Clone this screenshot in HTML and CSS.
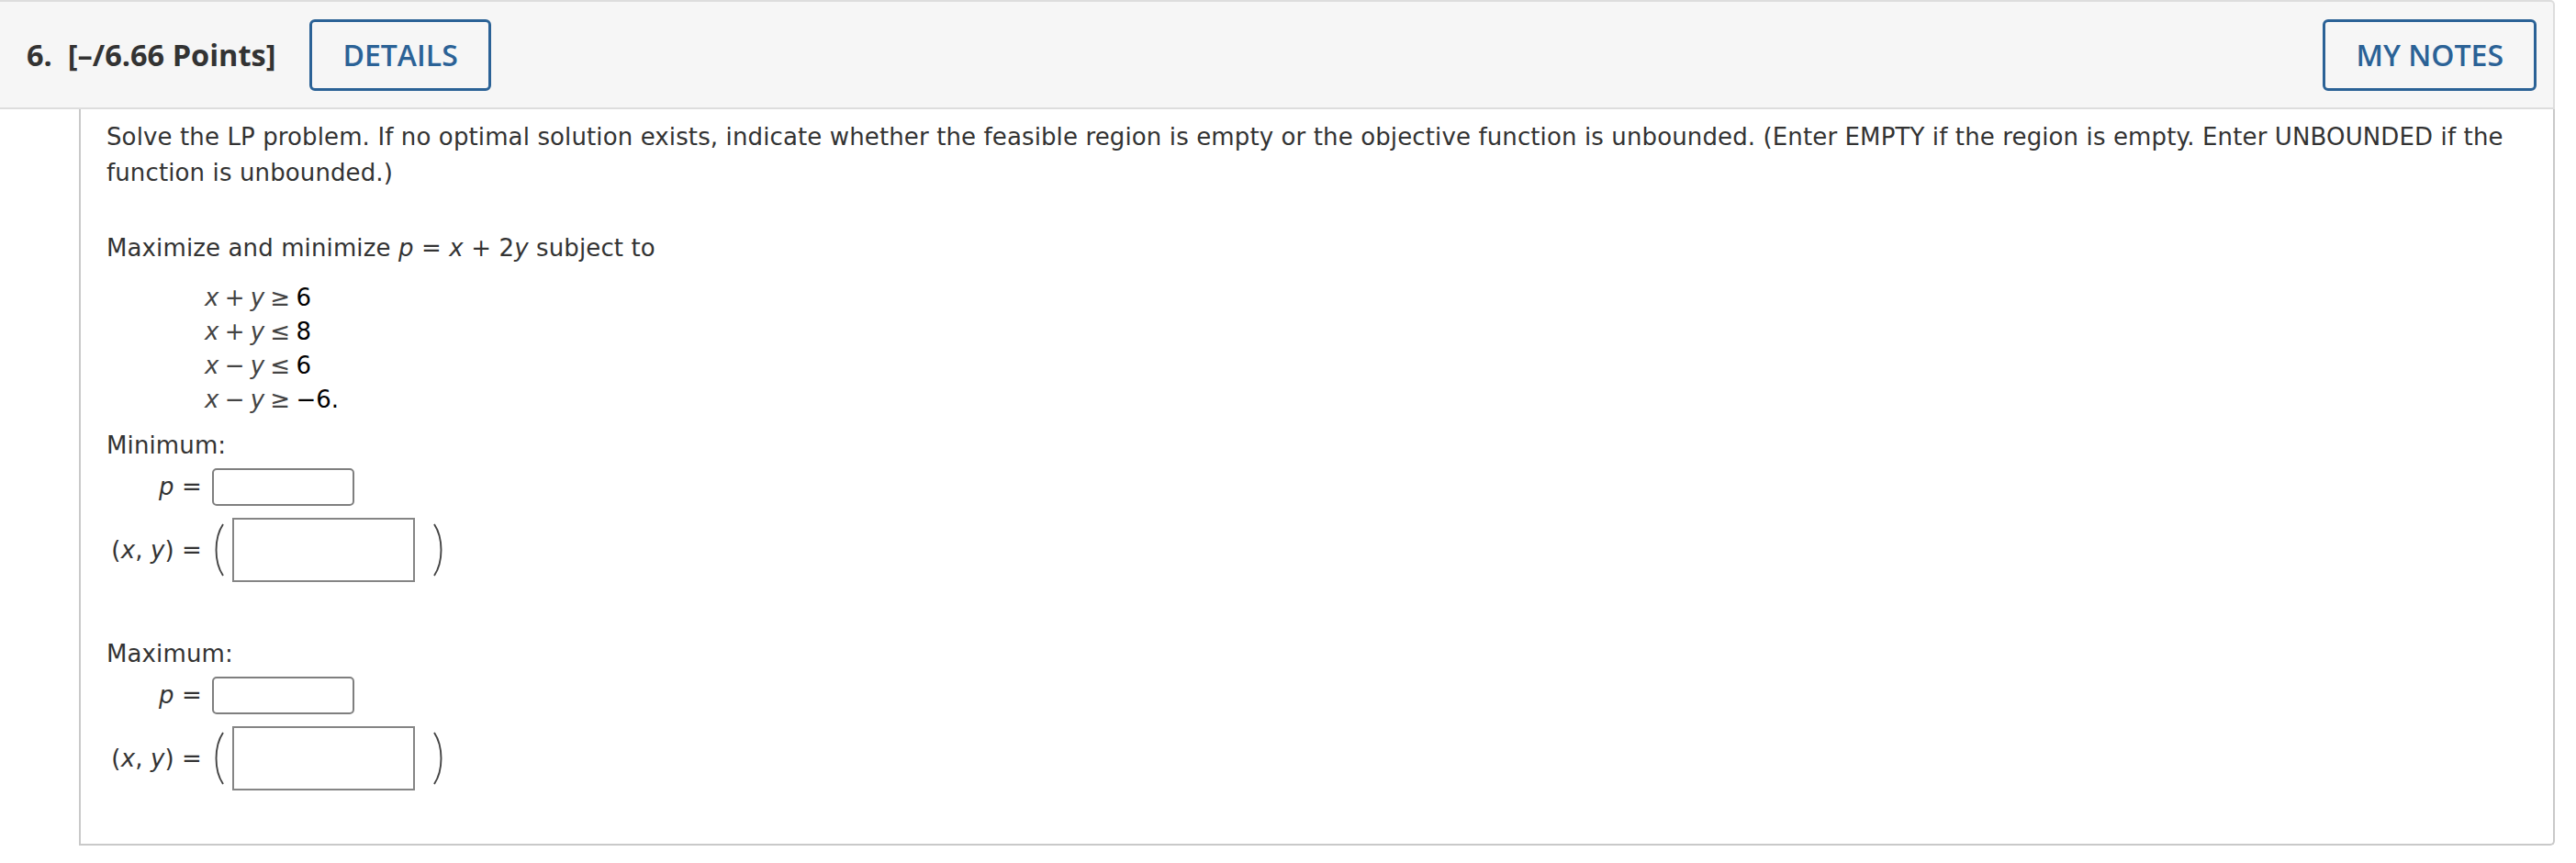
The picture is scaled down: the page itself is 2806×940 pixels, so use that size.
FILE: index.html
```html
<!DOCTYPE html>
<html lang="en">
<head>
<meta charset="utf-8">
<title>Question 6</title>
<link rel="stylesheet" href="styles.css">
</head>
<body>
<div class="question">
  <div class="q-header">
    <span class="q-title">6.&nbsp; [–/6.66 Points]</span>
    <button class="btn">DETAILS</button>
    <span class="spacer"></span>
    <button class="btn">MY NOTES</button>
  </div>
  <div class="q-body">
    <p class="intro">Solve the LP problem. If no optimal solution exists, indicate whether the feasible region is empty or the objective function is unbounded. (Enter EMPTY if the region is empty. Enter UNBOUNDED if the function is unbounded.)</p>
    <p class="objective">Maximize and minimize <i>p</i> = <i>x</i> + 2<i>y</i> subject to</p>
    <div class="constraints">
      <div><i>x</i> + <i>y</i> ≥ <span class="num">6</span></div>
      <div><i>x</i> + <i>y</i> ≤ <span class="num">8</span></div>
      <div><i>x</i> − <i>y</i> ≤ <span class="num">6</span></div>
      <div><i>x</i> − <i>y</i> ≥ <span class="num">−6.</span></div>
    </div>

    <div class="section-label first">Minimum:</div>
    <div class="answers">
      <div class="a-label"><i>p</i> =</div>
      <div class="a-field"><span class="p-input"></span></div>
      <div class="a-label xy-label">(<i>x</i>, <i>y</i>) =</div>
      <div class="a-field xy-field">
        <svg class="paren" width="14" height="58" viewBox="0 0 14 58"><path d="M12 1 C2 16 2 42 12 57" fill="none" stroke="#444" stroke-width="1.9"/></svg>
        <span class="xy-input"></span>
        <svg class="paren" width="14" height="58" viewBox="0 0 14 58"><path d="M2 1 C12 16 12 42 2 57" fill="none" stroke="#444" stroke-width="1.9"/></svg>
      </div>
    </div>

    <div class="section-label second">Maximum:</div>
    <div class="answers">
      <div class="a-label"><i>p</i> =</div>
      <div class="a-field"><span class="p-input"></span></div>
      <div class="a-label xy-label">(<i>x</i>, <i>y</i>) =</div>
      <div class="a-field xy-field">
        <svg class="paren" width="14" height="58" viewBox="0 0 14 58"><path d="M12 1 C2 16 2 42 12 57" fill="none" stroke="#444" stroke-width="1.9"/></svg>
        <span class="xy-input"></span>
        <svg class="paren" width="14" height="58" viewBox="0 0 14 58"><path d="M2 1 C12 16 12 42 2 57" fill="none" stroke="#444" stroke-width="1.9"/></svg>
      </div>
    </div>
  </div>
</div>
</body>
</html>
```
FILE: styles.css
```css
body {
  margin: 0;
  background: #ffffff;
}

.question {
  width: 2783px;
}

.q-header {
  display: flex;
  align-items: center;
  height: 119px;
  box-sizing: border-box;
  background: #f6f6f6;
  border: 2px solid #dddddd;
  border-left: none;
  border-top-right-radius: 5px;
  padding: 0 18px 0 29px;
}

.q-title {
  font-family: "Open Sans", "Liberation Sans", sans-serif;
  font-weight: 700;
  font-size: 32.5px;
  color: #333333;
  margin-right: 37px;
}

.spacer {
  flex: 1;
}

.btn {
  font-family: "Open Sans", "Liberation Sans", sans-serif;
  font-weight: 600;
  font-size: 32px;
  color: #2b6296;
  background: transparent;
  border: 3px solid #2b6296;
  border-radius: 6px;
  height: 78px;
  padding: 0 33px;
}

.q-body {
  margin-left: 86px;
  border: 2px solid #c9c9c9;
  border-top: none;
  border-bottom-right-radius: 5px;
  padding: 11px 26px 58px 28px;
  font-family: "DejaVu Sans", Verdana, sans-serif;
  font-size: 26px;
  letter-spacing: 0.12px;
  line-height: 39px;
  color: #333333;
}

.q-body p {
  margin: 0;
}

.q-body i {
  font-style: italic;
}

.objective {
  margin-top: 43px !important;
}

.constraints {
  margin-top: 16px;
  padding-left: 107px;
  font-size: 26px;
  letter-spacing: 0;
  word-spacing: -2px;
  line-height: 37px;
  color: #444444;
}

.constraints .num {
  color: #000000;
}

.section-label.first {
  margin-top: 12px;
}

.section-label.second {
  margin-top: 59px;
}

.answers {
  display: grid;
  grid-template-columns: 104px auto;
  column-gap: 11px;
  row-gap: 13px;
  align-items: center;
  margin-top: 5px;
}

.a-label {
  text-align: right;
  white-space: nowrap;
}

.a-field {
  display: flex;
  align-items: center;
}

.p-input {
  display: block;
  width: 155px;
  height: 41px;
  box-sizing: border-box;
  border: 2px solid #7f7f7f;
  border-radius: 5px;
  background: #fff;
}

.xy-input {
  display: block;
  width: 199px;
  height: 70px;
  box-sizing: border-box;
  border: 2px solid #858585;
  background: #fff;
  margin: 0 19px 0 8px;
}

.paren {
  display: block;
}
```
